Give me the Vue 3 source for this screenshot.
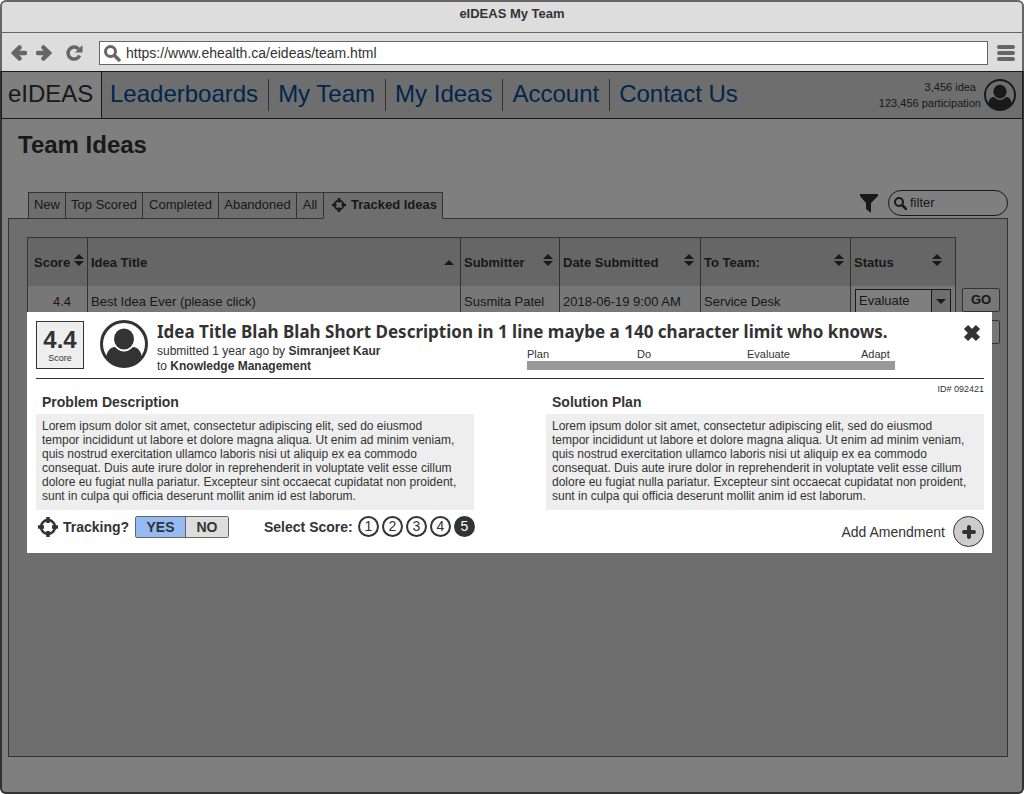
<script setup>
import { ref } from 'vue'

const nav = ['Leaderboards', 'My Team', 'My Ideas', 'Account', 'Contact Us']
const tabs = ['New', 'Top Scored', 'Completed', 'Abandoned', 'All']
const columns = [
  { key: 'score', label: 'Score', sort: 'both' },
  { key: 'title', label: 'Idea Title', sort: 'up' },
  { key: 'submitter', label: 'Submitter', sort: 'both' },
  { key: 'date', label: 'Date Submitted', sort: 'both' },
  { key: 'team', label: 'To Team:', sort: 'both' },
  { key: 'status', label: 'Status', sort: 'both' },
]
const stages = ['Plan', 'Do', 'Evaluate', 'Adapt']
const lorem = [
  'Lorem ipsum dolor sit amet, consectetur adipiscing elit, sed do eiusmod',
  'tempor incididunt ut labore et dolore magna aliqua. Ut enim ad minim veniam,',
  'quis nostrud exercitation ullamco laboris nisi ut aliquip ex ea commodo',
  'consequat. Duis aute irure dolor in reprehenderit in voluptate velit esse cillum',
  'dolore eu fugiat nulla pariatur. Excepteur sint occaecat cupidatat non proident,',
  'sunt in culpa qui officia deserunt mollit anim id est laborum.',
].join('\n')

const url = ref('https://www.ehealth.ca/eideas/team.html')
const status = ref('Evaluate')
const tracking = ref(true)
const score = ref(5)
</script>

<template>
  <div class="window">
    <div class="chrome">
      <header class="titlebar">eIDEAS My Team</header>

      <div class="toolbar">
        <button class="icon-btn" aria-label="Back">
          <svg width="16" height="16" viewBox="0 0 16 16"><path d="M8.500 2.500 3 8l5.500 5.500M4 8h10" fill="none" stroke="#666" stroke-width="4.500" stroke-linecap="round" /></svg>
        </button>
        <button class="icon-btn" aria-label="Forward">
          <svg width="16" height="16" viewBox="0 0 16 16"><path d="M7.500 2.500 13 8l-5.500 5.500M12 8H2" fill="none" stroke="#666" stroke-width="4.500" stroke-linecap="round" /></svg>
        </button>
        <button class="icon-btn reload" aria-label="Reload">
          <svg width="17" height="16" viewBox="0 0 17 16"><path d="M12.500 4A6 6 0 1 0 13.600 10.500" fill="none" stroke="#666" stroke-width="3.500" /><path d="M16.500 0v7.500H9z" fill="#666" /></svg>
        </button>
        <label class="address">
          <svg width="17" height="17" viewBox="0 0 17 17"><circle cx="6.500" cy="6.500" r="5" fill="none" stroke="#666" stroke-width="3" /><path d="M10.500 10.500 15 15" stroke="#666" stroke-width="3.500" stroke-linecap="round" /></svg>
          <input v-model="url" type="text" aria-label="Address">
        </label>
        <button class="icon-btn" aria-label="Menu">
          <svg width="18" height="16" viewBox="0 0 18 16"><path d="M2 2h14M2 8h14M2 14h14" stroke="#666" stroke-width="4" stroke-linecap="round" /></svg>
        </button>
      </div>
    </div>

    <div class="page">
      <nav class="nav">
        <a class="brand" href="#">eIDEAS</a>
        <a v-for="item in nav" :key="item" class="nav-link" href="#">{{ item }}</a>
        <div class="stats"><span class="idea">3,456 idea</span><span>123,456 participation</span></div>
        <svg class="user" width="32" height="32" viewBox="0 0 48 48"><circle cx="24" cy="24" r="22.500" fill="none" stroke="#333" stroke-width="3" /><ellipse cx="24" cy="19" rx="10" ry="10.500" fill="#333" /><path d="M6 38c1-7 4-11 9-11 3 3 6 4.500 9 4.500s6-1.500 9-4.500c5 0 8 4 9 11a22.500 22.500 0 0 1-36 0z" fill="#333" /></svg>
      </nav>

      <h1>Team Ideas</h1>

      <div class="tab-row">
        <div class="tabs" role="tablist">
          <button v-for="tab in tabs" :key="tab" class="tab" role="tab" aria-selected="false">{{ tab }}</button>
          <button class="tab active" role="tab" aria-selected="true">
            <svg width="14" height="14" viewBox="0 0 22 22"><circle cx="11" cy="11" r="7" fill="none" stroke="#333" stroke-width="3" /><path d="M11 0v7M11 15v7M0 11h7M15 11h7" stroke="#333" stroke-width="4" /></svg>
            Tracked Ideas
          </button>
        </div>
        <svg class="funnel" width="20" height="20" viewBox="0 0 20 20"><path d="M1 1h18v2l-7 7v10l-5-4v-6L1 3z" fill="#333" /></svg>
        <label class="filter">
          <svg width="13" height="13" viewBox="0 0 13 13"><circle cx="5" cy="5" r="4" fill="none" stroke="#333" stroke-width="2" /><path d="m8 8 4 4" stroke="#333" stroke-width="2.500" stroke-linecap="round" /></svg>
          <input type="search" placeholder="filter" aria-label="Filter ideas">
        </label>
      </div>

      <main class="panel">
        <table class="ideas">
          <colgroup><col v-for="c in columns" :key="c.key" :class="'c-' + c.key"></colgroup>
          <thead>
            <tr>
              <th v-for="c in columns" :key="c.key" scope="col" :class="'h-' + c.key">
                <div class="head">
                  <span>{{ c.label }}</span>
                  <svg v-if="c.sort === 'both'" class="sort" width="10" height="12" viewBox="0 0 10 12"><path d="M0 5h10L5 0zM0 7h10l-5 5z" fill="#333" /></svg>
                  <svg v-else width="10" height="5" viewBox="0 0 10 5"><path d="M0 5h10L5 0z" fill="#333" /></svg>
                </div>
              </th>
            </tr>
          </thead>
          <tbody>
            <tr>
              <td class="num">4.4</td>
              <td>Best Idea Ever (please click)</td>
              <td>Susmita Patel</td>
              <td>2018-06-19 9:00 AM</td>
              <td>Service Desk</td>
              <td class="status">
                <div class="select">
                  <select v-model="status" aria-label="Status"><option>Evaluate</option></select>
                  <span class="arrow"><svg width="10" height="5" viewBox="0 0 10 5"><path d="M0 0h10L5 5z" fill="#333" /></svg></span>
                </div>
              </td>
            </tr>
          </tbody>
        </table>
        <div class="actions">
          <button class="go">GO</button>
          <button class="go">GO</button>
        </div>
      </main>

      <div class="overlay">
        <section class="modal" role="dialog" aria-labelledby="idea-title">
          <div class="summary">
            <div class="score-box"><b>4.4</b><span>Score</span></div>
            <svg class="avatar" width="48" height="48" viewBox="0 0 48 48"><circle cx="24" cy="24" r="22.500" fill="none" stroke="#333" stroke-width="3" /><ellipse cx="24" cy="19" rx="10" ry="10.500" fill="#333" /><path d="M6 38c1-7 4-11 9-11 3 3 6 4.500 9 4.500s6-1.500 9-4.500c5 0 8 4 9 11a22.500 22.500 0 0 1-36 0z" fill="#333" /></svg>
            <div class="info">
              <h2 id="idea-title">Idea Title Blah Blah Short Description in 1 line maybe a 140 character limit who knows.</h2>
              <div class="sub">
                <p class="by">submitted 1 year ago by <b>Simranjeet Kaur</b><br>to <b>Knowledge Management</b></p>
                <div class="progress">
                  <div class="stages"><span v-for="s in stages" :key="s">{{ s }}</span></div>
                  <div class="bar"></div>
                </div>
              </div>
            </div>
            <button class="close" aria-label="Close">
              <svg width="18" height="18" viewBox="0 0 18 18"><path d="m3 3 12 12M15 3 3 15" stroke="#333" stroke-width="6" /></svg>
            </button>
          </div>

          <div class="idea-id">ID# 092421</div>

          <div class="texts">
            <div class="text"><h3>Problem Description</h3><p>{{ lorem }}</p></div>
            <div class="text"><h3>Solution Plan</h3><p>{{ lorem }}</p></div>
          </div>

          <div class="footer">
            <svg class="target" width="22" height="22" viewBox="0 0 22 22"><circle cx="11" cy="11" r="7" fill="none" stroke="#333" stroke-width="2.500" /><path d="M11 1v6M11 15v6M1 11h6M15 11h6" stroke="#333" stroke-width="3.500" /></svg>
            <span class="tracking">Tracking?</span>
            <div class="toggle" role="group" aria-label="Tracking">
              <button :class="{ on: tracking }" :aria-pressed="tracking" @click="tracking = true">YES</button>
              <button :class="{ on: !tracking }" :aria-pressed="!tracking" @click="tracking = false">NO</button>
            </div>
            <fieldset class="scores">
              <legend>Select Score:</legend>
              <label v-for="n in 5" :key="n">
                <input v-model="score" type="radio" name="score" :value="n">
                <span>{{ n }}</span>
              </label>
            </fieldset>
            <div class="amend">
              <a href="#">Add Amendment</a>
              <button class="add" aria-label="Add amendment">
                <svg width="14" height="14" viewBox="0 0 14 14"><path d="M7 2v10M2 7h10" stroke="#333" stroke-width="4" stroke-linecap="round" /></svg>
              </button>
            </div>
          </div>
        </section>
      </div>
    </div>
  </div>
</template>

<style>
body {
  background: #fff;
}
</style>

<style scoped>
.window,
.window * {
  box-sizing: border-box;
}
.window {
  display: flex;
  flex-direction: column;
  min-height: 100vh;
  color: #333;
  font: 13px/16px "Liberation Sans", Arial, sans-serif;
}
button,
input,
select {
  font: inherit;
  color: inherit;
}
button {
  margin: 0;
  padding: 0;
  border: 0;
  background: none;
}
svg {
  display: block;
  flex: none;
}
h1, h2, h3, p {
  margin: 0;
}

.chrome {
  border: 2px solid #666;
  border-bottom: 0;
  border-radius: 6px 6px 0 0;
  background: #ddd;
}
.titlebar {
  height: 31px;
  padding-top: 4px;
  border-bottom: 1px solid #666;
  text-align: center;
  font-weight: bold;
}
.toolbar {
  display: flex;
  align-items: center;
  height: 38px;
  padding: 2px 7px 0 9px;
  gap: 9px;
}
.reload {
  margin: 0 7px 0 5px;
}
.address {
  display: flex;
  align-items: center;
  flex: 1;
  gap: 5px;
  height: 24px;
  padding: 0 4px;
  border: 1px solid #666;
  background: #fff;
}
.address input {
  flex: 1;
  padding: 0;
  border: 0;
  outline: 0;
  background: none;
  font-size: 14px;
}

.page {
  position: relative;
  display: flex;
  flex-direction: column;
  flex: 1;
  border: solid #666;
  border-width: 0 2px 2px;
  border-radius: 0 0 6px 6px;
  background: #fff;
}
.nav {
  display: flex;
  align-items: center;
  height: 48px;
  margin: 0 -1px;
  border: 1px solid #333;
  background: #ddd;
  font-size: 24px;
  line-height: 32px;
}
.brand {
  align-self: stretch;
  width: 100px;
  padding: 6px 0 0 6px;
  border-right: 1px solid #333;
  background: #fff;
  color: #333;
  text-decoration: none;
}
.nav-link {
  padding: 0 10px 2px 9px;
  border-right: 1px solid #666;
  color: #004c99;
  line-height: 30px;
  text-decoration: none;
}
.brand + .nav-link {
  padding-left: 8px;
}
.nav-link:last-of-type {
  border-right: 0;
}
.stats {
  display: flex;
  flex-direction: column;
  align-items: flex-end;
  margin-left: auto;
  font-size: 11px;
  line-height: 16px;
}
.idea {
  padding-right: 5px;
}
.user {
  margin: 0 6px 0 3px;
}
h1 {
  padding: 11px 16px 0;
  font-size: 24px;
  line-height: 30px;
}
.tab-row {
  display: flex;
  align-items: flex-end;
  margin-top: 30px;
  padding: 0 14px 0 26px;
}
.tabs {
  position: relative;
  display: grid;
  grid-template-columns: 37px 77px 76px 78px 27px auto;
  margin-right: auto;
  margin-bottom: -1px;
}
.tab {
  height: 27px;
  padding: 0 0 2px;
  border: 1px solid #666;
  border-right: 0;
  background: #ddd;
}
.tab.active {
  display: flex;
  align-items: center;
  gap: 5px;
  padding: 0 5px 2px 8px;
  border-right: 1px solid #666;
  border-bottom-color: #ddd;
  font-weight: bold;
}
.funnel {
  margin: 0 9px 5px 0;
}
.filter {
  display: flex;
  align-items: center;
  gap: 3px;
  width: 120px;
  height: 26px;
  margin-bottom: 2px;
  padding: 0 10px 0 5px;
  border: 1px solid #333;
  border-radius: 13px;
  background: #fff;
}
.filter input {
  width: 100%;
  min-width: 0;
  padding: 0;
  border: 0;
  outline: 0;
  background: none;
}
.filter input::placeholder {
  color: #333;
  opacity: 1;
}

.panel {
  display: flex;
  align-items: flex-start;
  flex: 1;
  gap: 6px;
  margin: 0 14px 35px 6px;
  padding: 18px 7px 18px 18px;
  border: 1px solid #666;
  background: #ddd;
}
.ideas {
  flex: 1;
  table-layout: fixed;
  border-collapse: collapse;
  border: 1px solid #666;
}
.c-score { width: 60px; }
.c-submitter { width: 99px; }
.c-date { width: 141px; }
.c-team { width: 150px; }
.c-status { width: 105px; }
th {
  height: 48px;
  padding: 0 6px 0 3px;
  border-right: 1px solid #666;
  background: #ccc;
  text-align: left;
}
.h-score {
  padding: 0 3px 0 6px;
}
.h-status {
  padding-right: 13px;
}
.head {
  display: flex;
  align-items: center;
  justify-content: space-between;
  height: 18px;
  margin-top: 2px;
}
.sort {
  margin-bottom: 5px;
}
td {
  height: 32px;
  padding: 2px 3px 0;
  border-right: 1px solid #666;
  background: #eee;
  white-space: nowrap;
}
.num {
  padding-right: 16px;
  text-align: right;
  color: #4b2350;
}
.status {
  padding: 0 4px;
}
.select {
  position: relative;
  height: 25px;
  border: 1px solid #333;
  background: #fff;
}
.select select {
  display: block;
  width: 100%;
  height: 23px;
  padding: 0 20px 0 3px;
  border: 0;
  appearance: none;
  background: none;
}
.arrow {
  position: absolute;
  top: 0;
  right: 0;
  display: flex;
  align-items: center;
  justify-content: center;
  width: 19px;
  height: 100%;
  border-left: 1px solid #333;
  background: #ddd;
  pointer-events: none;
}
.actions {
  display: grid;
  gap: 8px;
  width: 38px;
  padding-top: 51px;
}
.go {
  height: 24px;
  border: 1px solid #666;
  border-radius: 2px;
  background: #eee;
  font-weight: bold;
}

.overlay {
  position: absolute;
  inset: 0 -2px -2px;
  z-index: 1;
  padding: 241px 32px 0 27px;
  border-radius: 0 0 6px 6px;
  background: rgba(0, 0, 0, 0.5);
}
.modal {
  padding: 8px 8px 6px 9px;
  background: #fff;
}
.summary {
  display: flex;
  align-items: flex-start;
  height: 59px;
  border-bottom: 1px solid #333;
}
.score-box {
  display: flex;
  flex-direction: column;
  align-items: center;
  width: 48px;
  height: 48px;
  margin-top: 1px;
  padding-top: 6px;
  border: 1px solid #333;
  background: #eee;
  font-size: 9px;
  line-height: 13px;
}
.score-box b {
  font-size: 24px;
  line-height: 24px;
}
.avatar {
  margin: 0 9px 0 16px;
}
.info {
  flex: 1;
  min-width: 0;
}
h2 {
  font: bold 17px/24px "Noto Sans", sans-serif;
  white-space: nowrap;
}
.sub {
  display: flex;
  font-size: 12px;
  line-height: 15px;
}
.by {
  flex: 1;
}
.progress {
  width: 368px;
  padding-top: 3px;
  font-size: 11px;
  line-height: 14px;
}
.stages {
  display: grid;
  grid-template-columns: 110fr 110fr 114fr 34fr;
}
.bar {
  height: 9px;
  background: #999;
}
.close {
  margin: 4px 3px 0 68px;
}
.idea-id {
  height: 15px;
  padding-top: 3px;
  text-align: right;
  font-size: 9px;
  line-height: 14px;
}
.texts {
  display: grid;
  grid-template-columns: 1fr 1fr;
  gap: 72px;
}
h3 {
  padding-left: 6px;
  font-size: 14px;
  line-height: 17px;
}
.text p {
  height: 96px;
  margin-top: 3px;
  padding: 5px 0 0 6px;
  background: #eee;
  font-size: 12px;
  line-height: 14px;
  white-space: pre;
}
.footer {
  display: flex;
  align-items: flex-start;
  padding-top: 6px;
  font-size: 14px;
  line-height: 22px;
}
.target {
  margin-left: 1px;
}
.tracking {
  width: 76px;
  padding-left: 4px;
  font-weight: bold;
}
.toggle {
  display: flex;
  height: 22px;
  margin-right: 35px;
  border: 1px solid #666;
  border-radius: 2px;
  font-weight: bold;
}
.toggle button {
  width: 42px;
  background: #ddd;
  line-height: 20px;
}
.toggle button:first-child {
  width: 50px;
  border-right: 1px solid #666;
}
.toggle .on {
  background: #96bbf3;
}
.scores {
  display: flex;
  gap: 3px;
  margin: 0;
  padding: 0;
  border: 0;
}
.scores legend {
  float: left;
  width: 91px;
  padding: 0;
  font-weight: bold;
}
.scores label {
  position: relative;
}
.scores input {
  position: absolute;
  inset: 0;
  margin: 0;
  opacity: 0;
}
.scores span {
  display: block;
  width: 21px;
  height: 21px;
  border: 2px solid #333;
  border-radius: 50%;
  text-align: center;
  line-height: 17px;
}
.scores input:checked + span {
  background: #333;
  color: #fff;
}
.amend {
  display: flex;
  align-items: center;
  gap: 8px;
  margin-left: auto;
}
.amend a {
  color: #333;
  text-decoration: none;
}
.add {
  display: flex;
  align-items: center;
  justify-content: center;
  width: 31px;
  height: 31px;
  border: 1px solid #333;
  border-radius: 50%;
  background: #ccc;
}
</style>
